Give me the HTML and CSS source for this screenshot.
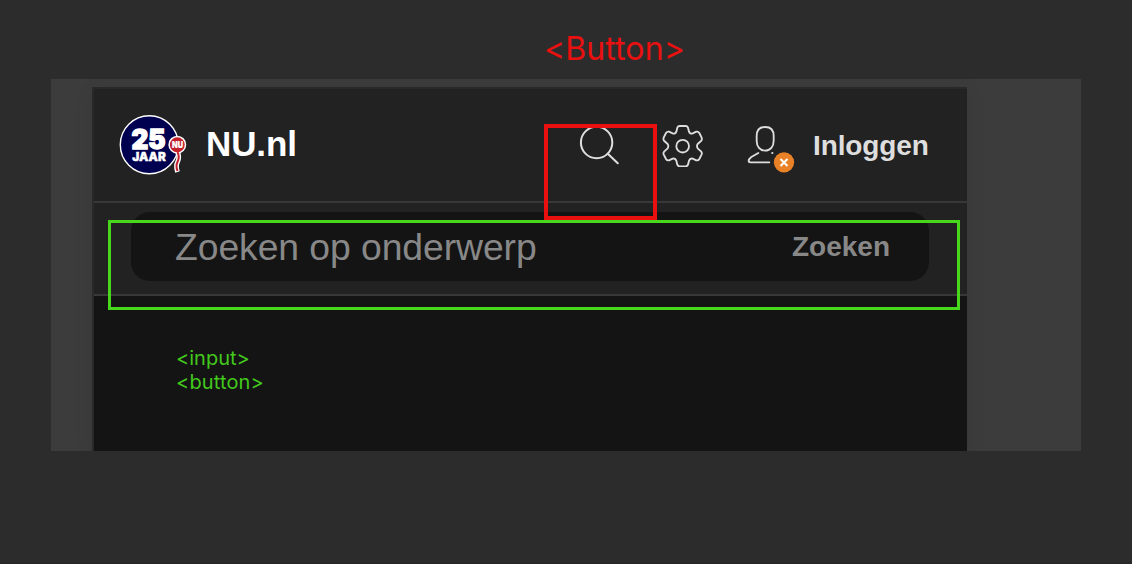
FILE: index.html
```html
<!DOCTYPE html>
<html lang="nl">
<head>
<meta charset="utf-8">
<title>NU.nl</title>
<link rel="stylesheet" href="styles.css">
</head>
<body>
<main class="board">
  <section class="backdrop">
    <div class="panel">
      <header class="header">
        <svg class="logo" viewBox="118 113 70 62" width="70" height="62">
          <circle cx="149.3" cy="144.7" r="29" fill="#000050" stroke="#fff" stroke-width="1.4"/>
          <text class="logo-num" x="131.500" y="149.300" textLength="34" lengthAdjust="spacingAndGlyphs">25</text>
          <text class="logo-word" x="132.300" y="160.700" textLength="33.500" lengthAdjust="spacingAndGlyphs">JAAR</text>
          <path d="M177.500 152Q180 157 177.500 162Q175.500 166 177.500 172" fill="none" stroke="#fff" stroke-width="4.800"/>
          <circle cx="177.300" cy="144.700" r="8.200" fill="#c4202c" stroke="#fff" stroke-width="1.500"/>
          <path d="M177.500 152Q180 157 177.500 162Q175.500 166 177.500 171" fill="none" stroke="#c4202c" stroke-width="2"/>
          <text class="logo-nu" x="172" y="148.300" textLength="11" lengthAdjust="spacingAndGlyphs">NU</text>
        </svg>
        <span class="brand">NU.nl</span>
        <svg class="icon icon-search" viewBox="578 124 44 42" width="44" height="42">
          <circle cx="596.600" cy="142.500" r="15.700"/>
          <path d="M607.800 153.700L617.800 163.300"/>
        </svg>
        <svg class="icon icon-gear" viewBox="381 44 126 126" width="42" height="42">
          <path d="M427 52Q429 47 434 47H452Q457 47 459 52L462 64Q465 72 473 69L484 64Q490 63 493 68L500 82Q502 88 498 92L488 101Q484 107 488 114L498 123Q502 127 500 132L493 146Q490 151 484 150L473 145Q465 143 462 151L459 163Q457 168 452 168H434Q429 168 427 163L424 151Q421 143 413 145L402 150Q396 151 393 146L386 132Q384 127 388 123L398 114Q402 107 398 101L388 92Q384 88 386 82L393 68Q396 63 402 64L413 69Q421 72 424 64Z"/>
          <circle cx="443" cy="107.500" r="19"/>
        </svg>
        <svg class="icon icon-user" viewBox="51 45 147 147" width="49" height="49">
          <path d="M105.500 51C88 51 80 62 80 78V92C80 110 90 122 105.500 122C121 122 131 110 131 92V78C131 62 123 51 105.500 51Z"/>
          <path d="M85 129L64 141Q56 147 56 153Q56 157 62 157H118"/>
          <path d="M126.500 129h1"/>
          <circle class="badge" cx="162" cy="157" r="30.500"/>
          <path class="cross" d="M151.500 147L172.500 168M172.500 147L151.500 168"/>
        </svg>
        <span class="login">Inloggen</span>
      </header>
      <div class="search">
        <div class="field">
          <span class="placeholder">Zoeken op onderwerp</span>
          <span class="submit">Zoeken</span>
        </div>
      </div>
    </div>
  </section>
  <div class="outline outline-red"></div>
  <div class="outline outline-green"></div>
  <div class="note note-red">&lt;Button&gt;</div>
  <div class="note note-green">&lt;input&gt;<br><span class="wide">&lt;button&gt;</span></div>
</main>
</body>
</html>
```
FILE: styles.css
```css
* { box-sizing: border-box; }
body { margin: 0; background: #2c2c2c; font-family: "Liberation Sans", Arial, sans-serif; }
.board { position: relative; width: 1132px; height: 564px; padding: 79px 51px 0; overflow: hidden; border-bottom: 2px solid #292728; }
.backdrop { height: 372px; padding: 8px 114px 0 41px; background: #3c3c3c; overflow: hidden; }
.panel { height: 364px; background: #141414; border-top: 2px solid #292929; border-left: 2px solid #292929; box-shadow: 0 4px 20px rgba(0, 0, 0, .07); }
.header { display: flex; align-items: flex-start; height: 114px; padding: 24px 37px 0 24px; background: #222; border-bottom: 2px solid #383838; }
.logo { flex: none; }
.logo text { fill: #fff; stroke: #fff; font-family: Inter, sans-serif; font-weight: 900; }
.logo-num { font-size: 26.500px; stroke-width: 1.300px; }
.logo-word { font-size: 12px; stroke-width: .4px; stroke-linejoin: round; }
.logo .logo-nu { font-size: 9.500px; stroke-width: .2px; stroke-linejoin: round; }
.brand { width: 96px; margin: 11px 0 0 18px; font-size: 35px; line-height: 40px; font-weight: 700; color: #fff; letter-spacing: -.1px; }
.icon { flex: none; fill: none; stroke: #dedede; stroke-width: 2; stroke-linecap: round; stroke-linejoin: round; }
.icon-search { margin: 11px 0 0 276px; }
.icon-gear { margin: 12px 0 0 40px; stroke-width: 5.500; }
.icon-user { margin: 12px 0 0 43px; stroke-width: 5.500; }
.icon .badge { fill: #e98227; stroke: none; }
.icon .cross { stroke: #fff; stroke-width: 6; stroke-linecap: butt; }
.login { margin: 17px 0 0 17px; font-size: 28px; line-height: 32px; font-weight: 700; color: #dedede; letter-spacing: -.1px; }
.search { height: 93px; padding: 9px 38px 0 37px; background: #222; border-bottom: 2px solid #383838; }
.field { display: flex; align-items: center; justify-content: space-between; height: 69px; padding: 1px 39px 0 44px; border-radius: 19px; background: #141414; color: #888; }
.placeholder { font-size: 37.330px; line-height: 42px; letter-spacing: -.08px; }
.submit { font-size: 28px; line-height: 32px; font-weight: 700; }
.outline { position: absolute; }
.outline-red { left: 544px; top: 124px; width: 113px; height: 96px; border: 4px solid #eb1010; }
.outline-green { left: 108px; top: 220px; width: 852px; height: 90px; border: 3px solid #48d71d; }
.note { position: absolute; font-family: Inter, sans-serif; white-space: nowrap; }
.note-red { left: 544px; top: 29px; font-size: 32px; line-height: 39px; font-weight: 400; letter-spacing: .1px; color: #eb1010; }
.note-green { left: 176px; top: 346px; font-size: 20px; line-height: 24px; color: #43c91c; }
.note-green .wide { letter-spacing: .15px; }
```
